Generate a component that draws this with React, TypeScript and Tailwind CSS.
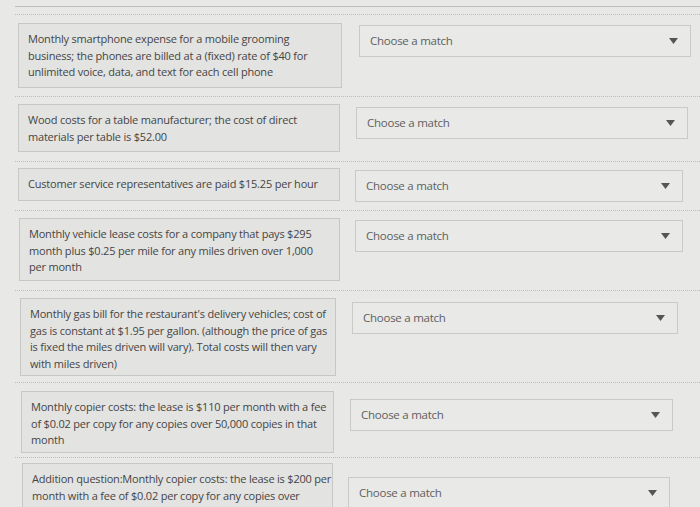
import { type ReactNode } from "react";

type MatchRow = {
  lines: string[];
  rowClass: string;
  boxClass: string;
  selectClass: string;
};

// 사진 원근 때문에 행마다 위치가 조금씩 다르다
const ROWS: MatchRow[] = [
  {
    lines: [
      "Monthly smartphone expense for a mobile grooming",
      "business; the phones are billed at a (fixed) rate of $40 for",
      "unlimited voice, data, and text for each cell phone",
    ],
    rowClass: "pt-2 pb-2",
    boxClass: "ml-[3px] w-[324px] h-[65px]",
    selectClass: "ml-[17px] w-[332px] mt-[2px]",
  },
  {
    lines: [
      "Wood costs for a table manufacturer; the cost of direct",
      "materials per table is $52.00",
    ],
    rowClass: "pt-[7px] pb-[9px]",
    boxClass: "ml-[3px] w-[322px] h-[48px]",
    selectClass: "ml-[16px] w-[332px] mt-[3px]",
  },
  {
    lines: ["Customer service representatives are paid $15.25 per hour"],
    rowClass: "pt-[6px] pb-2",
    boxClass: "ml-[3px] w-[322px] h-[33px]",
    selectClass: "ml-[15px] w-[328px] mt-[2px]",
  },
  {
    lines: [
      "Monthly vehicle lease costs for a company that pays $295",
      "month plus $0.25 per mile for any miles driven over 1,000",
      "per month",
    ],
    rowClass: "pt-[7px] pb-[9px]",
    boxClass: "ml-[4px] w-[321px] h-[63px]",
    selectClass: "ml-[15px] w-[328px] mt-[2px]",
  },
  {
    lines: [
      "Monthly gas bill for the restaurant's delivery vehicles; cost of",
      "gas is constant at $1.95 per gallon. (although the price of gas",
      "is fixed the miles driven will vary). Total costs will then vary",
      "with miles driven)",
    ],
    rowClass: "pt-[7px] pb-[6px]",
    boxClass: "ml-[5px] w-[316px] h-[78px]",
    selectClass: "ml-[16px] w-[326px] mt-[4px]",
  },
  {
    lines: [
      "Monthly copier costs: the lease is $110 per month with a fee",
      "of $0.02 per copy for any copies over 50,000 copies in that",
      "month",
    ],
    rowClass: "pt-2 pb-[4px]",
    boxClass: "ml-[6px] w-[313px] h-[62px]",
    selectClass: "ml-[16px] w-[323px] mt-[8px]",
  },
  {
    lines: [
      "Addition question:Monthly copier costs: the lease is $200 per",
      "month with a fee of $0.02 per copy for any copies over",
    ],
    rowClass: "pt-[5px]",
    boxClass: "ml-[7px] w-[311px] h-[60px]",
    selectClass: "ml-[15px] w-[322px] mt-[14px]",
  },
];

function Caret() {
  return (
    <svg width="9" height="6" viewBox="0 0 9 6" className="shrink-0">
      <path d="M0 0 L9 0 L4.5 6 Z" fill="#555555" />
    </svg>
  );
}

function MatchSelect({ className }: { className: string }) {
  return (
    <div
      className={`flex h-[32px] shrink-0 items-center justify-between border border-[#c9c9c7] bg-[#e9e9e7] pl-[10px] pr-[12px] ${className}`}
    >
      <span className="text-[11.5px] tracking-[-0.25px] text-[#606060]">Choose a match</span>
      <Caret />
    </div>
  );
}

function PromptBox({ lines, className }: { lines: string[]; className: string }): ReactNode {
  return (
    <div
      className={`shrink-0 overflow-hidden border border-[#c7c7c5] bg-[#e3e3e1] px-[9px] py-[7px] text-[11px] leading-[16.5px] tracking-[-0.2px] text-[#454545] ${className}`}
    >
      {lines.map((line, i) => (
        <div key={i} className="whitespace-nowrap">
          {line}
        </div>
      ))}
    </div>
  );
}

export default function App() {
  return (
    <div
      className="h-[507px] w-[700px] overflow-hidden bg-[#e8e8e6]"
      style={{ fontFamily: '"Open Sans", "Noto Sans", Arial, sans-serif' }}
    >
      <div className="h-[6px]" />
      <div className="ml-[15px] h-[1px] bg-[#bdbdbb]" />
      <div className="h-[7px]" />
      <div className="pl-[15px]">
        {ROWS.map((row, i) => (
          <div
            key={i}
            className={`flex items-start border-t border-dotted border-[#bcbcba] ${row.rowClass}`}
          >
            <PromptBox lines={row.lines} className={row.boxClass} />
            <MatchSelect className={row.selectClass} />
          </div>
        ))}
      </div>
    </div>
  );
}
